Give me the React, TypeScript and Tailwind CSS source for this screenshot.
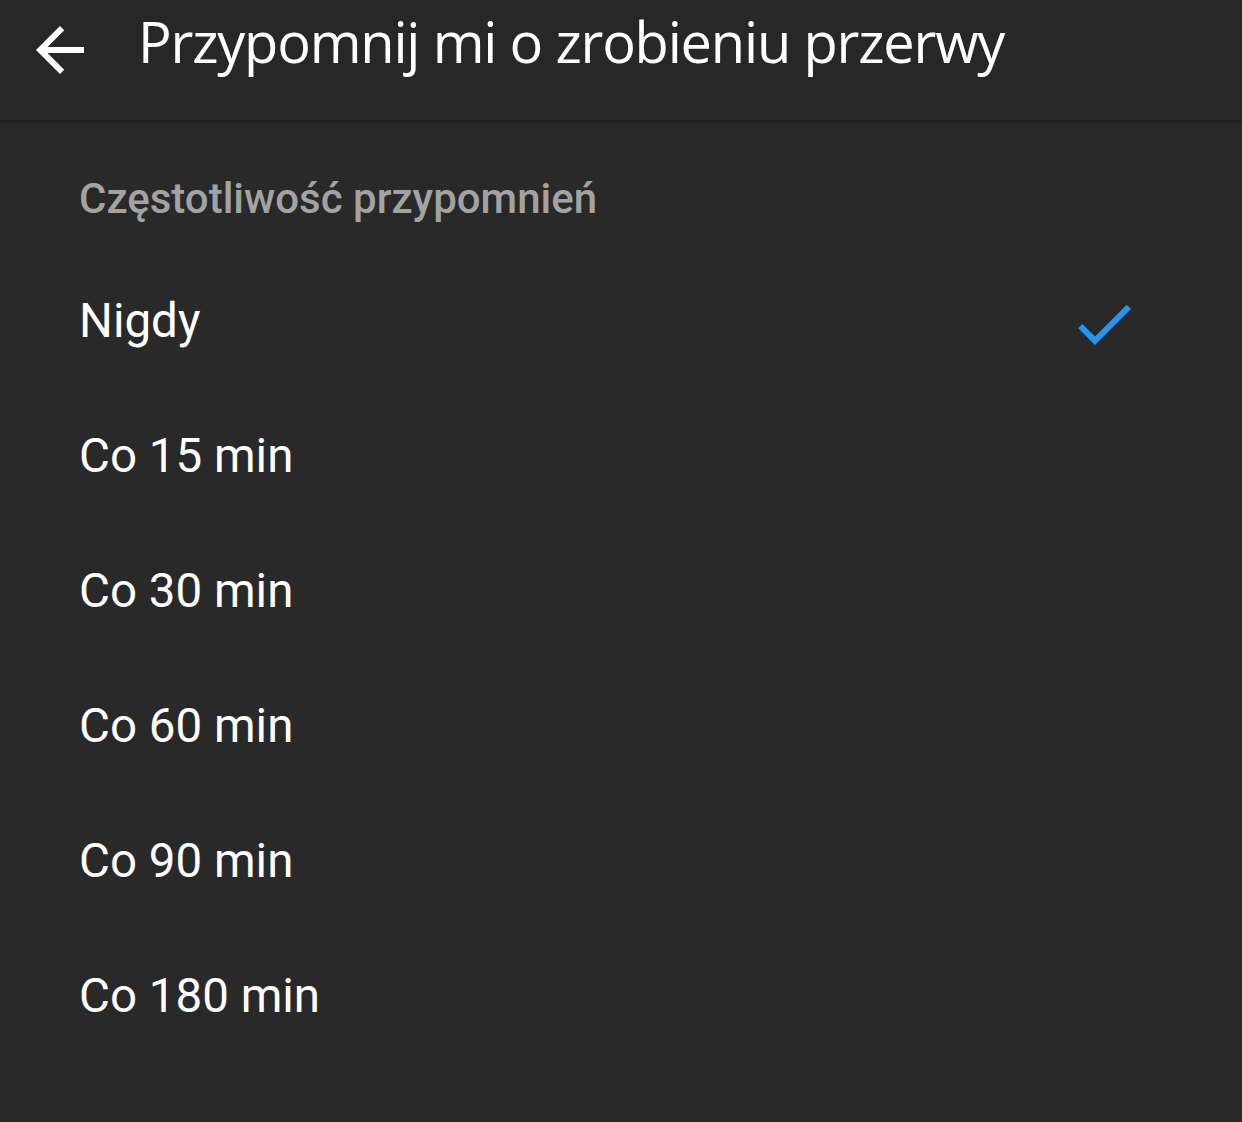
import React from "react";

const options = ["Nigdy", "Co 15 min", "Co 30 min", "Co 60 min", "Co 90 min", "Co 180 min"];

export default function App() {
  return (
    <div className="w-[1242px] h-[1122px] bg-[#292929] overflow-hidden flex flex-col">
      <div className="relative h-[120px] bg-[#272727] shadow-[0_2px_4px_rgba(0,0,0,0.35)] z-10 flex items-start shrink-0">
        <div className="w-[138px] h-[100px] flex items-center justify-center shrink-0 pl-[6px]">
          <svg width="72" height="72" viewBox="0 0 24 24" className="ml-[-24px]">
            <path fill="#ffffff" d="M20 11H7.83l5.59-5.59L12 4l-8 8 8 8 1.41-1.41L7.83 13H20v-2z" />
          </svg>
        </div>
        <div
          className="pt-[3px] text-[56px] leading-[76px] tracking-[-1.2px] text-white whitespace-nowrap"
          style={{ fontFamily: '"Open Sans", "Noto Sans", sans-serif' }}
        >
          Przypomnij mi o zrobieniu przerwy
        </div>
      </div>
      <div className="h-[134px] pt-[54px] pl-[79px] shrink-0">
        <div
          className="text-[42px] leading-[50px] font-medium text-[#a3a3a3] whitespace-nowrap"
          style={{ fontFamily: 'Roboto, "Noto Sans", sans-serif' }}
        >
          Częstotliwość przypomnień
        </div>
      </div>
      <div className="flex flex-col -mt-[1px]">
        {options.map((o, i) => (
          <div key={o} className="h-[135px] flex items-center justify-between pl-[79px] pr-[102px]">
            <span
              className="text-[47.5px] leading-[54px] text-white whitespace-nowrap"
              style={{ fontFamily: 'Roboto, "Noto Sans", sans-serif' }}
            >
              {o}
            </span>
            {i === 0 && (
              <svg width="72" height="72" viewBox="0 0 24 24" className="mt-[6px]">
                <path fill="#2196F3" d="M9 16.17L4.83 12l-1.42 1.41L9 19 21 7l-1.41-1.41z" />
              </svg>
            )}
          </div>
        ))}
      </div>
    </div>
  );
}
